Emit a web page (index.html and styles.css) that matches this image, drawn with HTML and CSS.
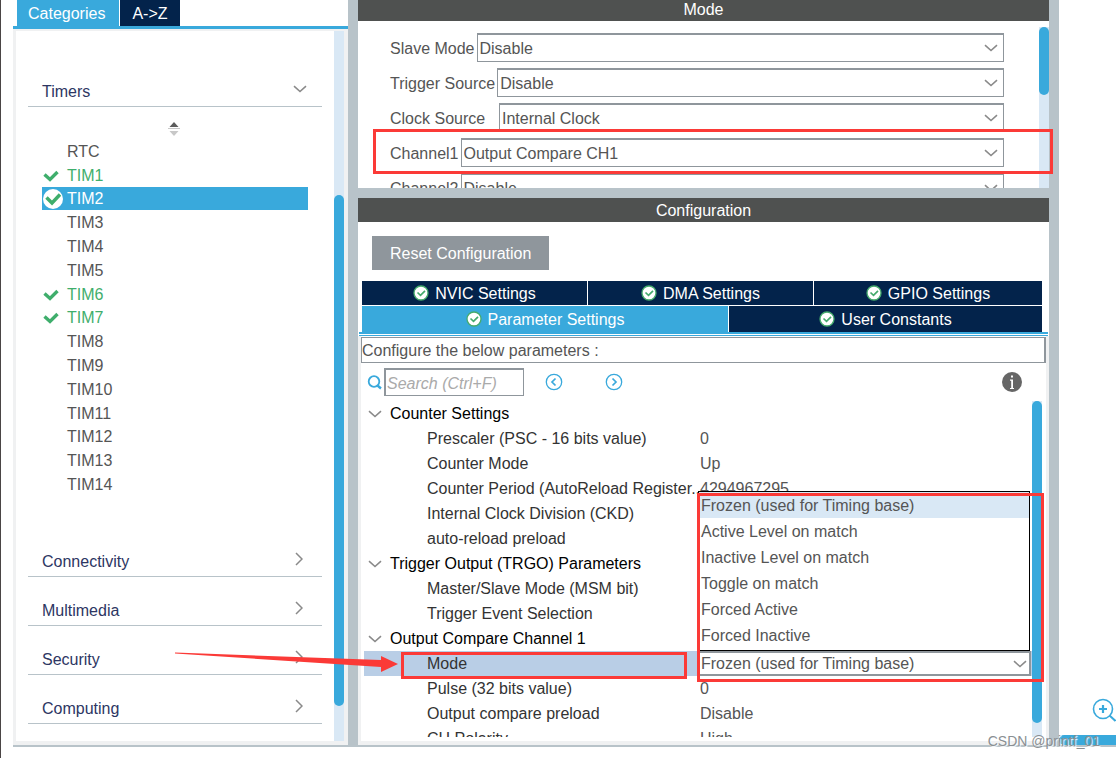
FILE: index.html
```html
<!DOCTYPE html>
<html lang="en">
<head>
<meta charset="utf-8">
<title>Pinout &amp; Configuration</title>
<link rel="stylesheet" href="styles.css">
</head>
<body>
<svg class="defs" aria-hidden="true">
  <symbol id="down" viewBox="0 0 14 8"><path d="M1 1.2 7 6.5 13 1.2" fill="none" stroke="#8a8a8a" stroke-width="1.6"/></symbol>
  <symbol id="right" viewBox="0 0 8 14"><path d="M1 1 7 7 1 13" fill="none" stroke="#8a8a8a" stroke-width="1.5"/></symbol>
  <symbol id="tick" viewBox="0 0 16 12"><path d="M1.5 4.5 7 9.5 14.500 2" fill="none" stroke="#3fae6c" stroke-width="3.400"/></symbol>
  <symbol id="ticked" viewBox="0 0 20 20"><circle cx="10" cy="10" r="10" fill="#fff"/><path d="M3.500 8.500 9 14 17 5.500" fill="none" stroke="#3fae6c" stroke-width="3.400"/></symbol>
  <symbol id="badge" viewBox="0 0 16 16"><circle cx="8" cy="8" r="7" fill="#fff" stroke="#45ab6d" stroke-width="1.300"/><path d="M4.500 7.500 7.500 10.300 12 5.800" fill="none" stroke="#45ab6d" stroke-width="1.700"/></symbol>
</svg>
<div class="app">
  <aside class="side">
    <nav class="side-tabs">
      <button class="side-tab active" type="button">Categories</button>
      <button class="side-tab" type="button">A-&gt;Z</button>
    </nav>
    <div class="side-body">
      <div class="side-list">
        <button class="category" type="button"><span>Timers</span><svg class="i-down"><use href="#down"/></svg></button>
        <div class="sorter"><svg width="12" height="14" viewBox="0 0 12 14"><path d="M6 0 10.500 5h-9z" fill="#5c5c5c"/><path d="M0 6h12v1H0z" fill="#c8c8c8"/><path d="M1.500 9h9L6 14z" fill="#c8c8c8"/></svg></div>
        <ul class="timers">
          <li><span class="mark"></span>RTC</li>
          <li class="on"><span class="mark"><svg class="i-tick"><use href="#tick"/></svg></span>TIM1</li>
          <li class="selected"><span class="mark"><svg class="i-ticked"><use href="#ticked"/></svg></span>TIM2</li>
          <li><span class="mark"></span>TIM3</li>
          <li><span class="mark"></span>TIM4</li>
          <li><span class="mark"></span>TIM5</li>
          <li class="on"><span class="mark"><svg class="i-tick"><use href="#tick"/></svg></span>TIM6</li>
          <li class="on"><span class="mark"><svg class="i-tick"><use href="#tick"/></svg></span>TIM7</li>
          <li><span class="mark"></span>TIM8</li>
          <li><span class="mark"></span>TIM9</li>
          <li><span class="mark"></span>TIM10</li>
          <li><span class="mark"></span>TIM11</li>
          <li><span class="mark"></span>TIM12</li>
          <li><span class="mark"></span>TIM13</li>
          <li><span class="mark"></span>TIM14</li>
        </ul>
        <button class="category" type="button"><span>Connectivity</span><svg class="i-right"><use href="#right"/></svg></button>
        <button class="category" type="button"><span>Multimedia</span><svg class="i-right"><use href="#right"/></svg></button>
        <button class="category" type="button"><span>Security</span><svg class="i-right"><use href="#right"/></svg></button>
        <button class="category" type="button"><span>Computing</span><svg class="i-right"><use href="#right"/></svg></button>
      </div>
      <div class="track side-track"><div class="thumb"></div></div>
    </div>
  </aside>
  <div class="split"></div>
  <main class="center">
    <section class="mode">
      <h2 class="title mode-title">Mode</h2>
      <div class="mode-body">
        <div class="fields">
          <div class="field"><label for="slave">Slave Mode</label><div class="pick"><select id="slave"><option>Disable</option></select><svg class="i-down"><use href="#down"/></svg></div></div>
          <div class="field"><label for="trigger">Trigger Source</label><div class="pick"><select id="trigger"><option>Disable</option></select><svg class="i-down"><use href="#down"/></svg></div></div>
          <div class="field"><label for="clock" class="wide">Clock Source</label><div class="pick"><select id="clock"><option>Internal Clock</option></select><svg class="i-down"><use href="#down"/></svg></div></div>
          <div class="field"><label for="ch1">Channel1</label><div class="pick"><select id="ch1"><option>Output Compare CH1</option></select><svg class="i-down"><use href="#down"/></svg></div></div>
          <div class="field"><label for="ch2">Channel2</label><div class="pick"><select id="ch2"><option>Disable</option></select><svg class="i-down"><use href="#down"/></svg></div></div>
        </div>
        <div class="track mode-track"><div class="thumb"></div></div>
      </div>
    </section>
    <section class="config">
      <h2 class="title">Configuration</h2>
      <button class="reset" type="button">Reset Configuration</button>
      <div class="tabs">
        <div class="tab-row three">
          <button type="button"><svg class="i-badge"><use href="#badge"/></svg>NVIC Settings</button>
          <button type="button"><svg class="i-badge"><use href="#badge"/></svg>DMA Settings</button>
          <button type="button"><svg class="i-badge"><use href="#badge"/></svg>GPIO Settings</button>
        </div>
        <div class="tab-row two">
          <button type="button" class="active"><svg class="i-badge"><use href="#badge"/></svg>Parameter Settings</button>
          <button type="button"><svg class="i-badge"><use href="#badge"/></svg>User Constants</button>
        </div>
      </div>
      <div class="rule"></div>
      <div class="params">
        <p class="hint">Configure the below parameters :</p>
        <div class="tools">
          <label for="search" aria-label="Search"><svg width="16" height="16" viewBox="0 0 16 16" fill="none" stroke="#39a9dc"><circle cx="7" cy="7.500" r="5.300" stroke-width="1.800"/><path d="m10.500 11.500 3.500 3" stroke-width="2.400"/></svg></label>
          <input id="search" type="text" placeholder="Search (Ctrl+F)">
          <button class="step" type="button" aria-label="Previous"><svg width="18" height="18" viewBox="0 0 18 18" fill="none" stroke="#39a9dc" stroke-width="1.300"><circle cx="9" cy="9" r="7.700"/><path d="M10.500 5.500 7 9l3.500 3.500" stroke-width="1.700"/></svg></button>
          <button class="step" type="button" aria-label="Next"><svg width="18" height="18" viewBox="0 0 18 18" fill="none" stroke="#39a9dc" stroke-width="1.300"><circle cx="9" cy="9" r="7.700"/><path d="M7.500 5.500 11 9l-3.500 3.500" stroke-width="1.700"/></svg></button>
          <button class="info" type="button" aria-label="Information"><svg width="20" height="20" viewBox="0 0 20 20"><circle cx="10" cy="10" r="10" fill="#666"/><path d="M9 3.500h2v2H9zM8 7.500h3V16H9.200V8.700H8zM8 16h4v1H8z" fill="#fff"/></svg></button>
        </div>
        <div class="tree">
          <div class="tree-view">
            <table>
              <colgroup><col class="c-name"><col></colgroup>
              <tbody>
                <tr><th colspan="2"><button type="button"><svg class="i-down"><use href="#down"/></svg>Counter Settings</button></th></tr>
                <tr><td>Prescaler (PSC - 16 bits value)</td><td>0</td></tr>
                <tr><td>Counter Mode</td><td>Up</td></tr>
                <tr><td>Counter Period (AutoReload Register..</td><td>4294967295</td></tr>
                <tr><td>Internal Clock Division (CKD)</td><td></td></tr>
                <tr><td>auto-reload preload</td><td></td></tr>
                <tr><th colspan="2"><button type="button"><svg class="i-down"><use href="#down"/></svg>Trigger Output (TRGO) Parameters</button></th></tr>
                <tr><td>Master/Slave Mode (MSM bit)</td><td></td></tr>
                <tr><td>Trigger Event Selection</td><td></td></tr>
                <tr><th colspan="2"><button type="button"><svg class="i-down"><use href="#down"/></svg>Output Compare Channel 1</button></th></tr>
                <tr class="current"><td><label for="ocmode">Mode</label></td><td class="editor">
                  <div class="pick"><select id="ocmode"><option>Frozen (used for Timing base)</option></select><svg class="i-down"><use href="#down"/></svg></div>
                  <ul class="menu">
                    <li class="hover">Frozen (used for Timing base)</li>
                    <li>Active Level on match</li>
                    <li>Inactive Level on match</li>
                    <li>Toggle on match</li>
                    <li>Forced Active</li>
                    <li>Forced Inactive</li>
                  </ul>
                </td></tr>
                <tr><td>Pulse (32 bits value)</td><td>0</td></tr>
                <tr><td>Output compare preload</td><td>Disable</td></tr>
                <tr><td>CH Polarity</td><td>High</td></tr>
              </tbody>
            </table>
          </div>
          <div class="track tree-track"><div class="thumb"></div></div>
        </div>
      </div>
    </section>
  </main>
  <div class="split"></div>
  <aside class="view">
    <button class="zoom" type="button" aria-label="Zoom in"><svg width="26" height="26" viewBox="0 0 26 26" fill="none" stroke="#39a9dc"><circle cx="11" cy="11" r="9.500" stroke-width="1.600"/><path d="M11 7v8M7 11h8" stroke-width="2.200"/><path d="m17.500 17.500 6 5.500" stroke-width="2"/></svg></button>
    <div class="view-bar"></div>
  </aside>
</div>
<div class="note note-channel"></div>
<div class="note note-mode"></div>
<div class="note note-value"></div>
<svg class="arrow" width="224" height="20" viewBox="0 0 224 20"><path d="M0 .5 206 8V4l17 8-17 8v-5L0 1.500z" fill="#fb3a37"/></svg>
<div class="watermark">CSDN @printf_01</div>
</body>
</html>
```
FILE: styles.css
```css
* { box-sizing: border-box; }
body {
  margin: 0;
  overflow: hidden;
  font: 16px/24px "Liberation Sans", Arial, sans-serif;
  color: #555;
  background: #fff;
}
button, input, select { font: inherit; color: inherit; }
button { border: 0; padding: 0; background: none; }
ul, p, h2 { margin: 0; padding: 0; }
ul { list-style: none; }
svg { display: block; flex: none; }
.defs { position: absolute; width: 0; height: 0; }
.i-down { width: 14px; height: 8px; }
.i-right { width: 8px; height: 14px; }
.i-tick { width: 16px; height: 12px; }
.i-ticked { width: 20px; height: 20px; }
.i-badge { width: 16px; height: 16px; }

.app {
  display: flex;
  height: 100vh;
  padding: 0 0 11px 12px;
  border-left: 1px solid #4a4545;
}
.split { width: 10px; flex: none; background: #b8c3c9; }

.track { width: 10px; flex: none; background: #d9e8f5; }
.thumb { border-radius: 5px; background: #39a9dc; }

/* category panel */
.side {
  width: 335px;
  flex: none;
  display: flex;
  flex-direction: column;
  border-bottom: 2px solid #b8c3c9;
}
.side-tabs {
  display: flex;
  gap: 1px;
  height: 29px;
  padding-left: 4px;
  border-bottom: 3px solid #39a9dc;
}
.side-tab { padding: 2px 12px 0; background: #03234b; color: #fff; }
.side-tab:first-child { padding: 2px 14px 0 11px; }
.side-tab.active { background: #39a9dc; }
.side-body {
  flex: 1;
  min-height: 0;
  display: flex;
  border: solid #f0f1f2;
  border-width: 2px 4px 4px 3px;
}
.side-list { flex: 1; padding: 27px 12px 0; }
.category {
  display: flex;
  width: 100%;
  height: 49px;
  padding: 20px 14px 0;
  justify-content: space-between;
  align-items: center;
  border-bottom: 1px solid #b8c3c9;
  color: #2d3663;
}
.category svg { margin-bottom: 6px; }
.category .i-down { margin-right: 1px; }
.category .i-right { margin-right: 5px; }
.sorter { display: flex; height: 32px; justify-content: center; padding: 15px 2px 0 0; }
.timers {
  display: flex;
  flex-direction: column;
  height: 357px;
  margin: 0 14px 32px;
  line-height: 20px;
}
.timers li { flex: 1; display: flex; align-items: center; padding-top: 2px; }
.timers .on { color: #3fae6c; }
.timers .selected { background: #39a9dc; color: #fff; }
.mark { width: 25px; padding-left: 1px; flex: none; }
.side-track { padding-top: 164px; }
.side-track .thumb { height: 511px; }

/* centre column */
.center { flex: 1; min-width: 0; max-width: 691px; display: flex; flex-direction: column; }
.title {
  height: 24px;
  font-size: 16px;
  line-height: 26px;
  font-weight: 400;
  text-align: center;
  color: #fff;
  background: #4f5150;
}
.mode-title { height: 21px; line-height: 20px; }
.mode {
  flex: none;
  height: 198px;
  display: flex;
  flex-direction: column;
  border-bottom: 10px solid #b8c3c9;
}
.mode-body { flex: 1; min-height: 0; display: flex; overflow: hidden; }
.fields { flex: 1; padding: 12px 35px 0 32px; display: flex; flex-direction: column; gap: 6px; }
.field { display: flex; gap: 2px; height: 29px; flex: none; }
.field label { line-height: 31px; white-space: nowrap; }
.field .wide { min-width: 107px; }
.field .pick { flex: 1; }
.mode-track { margin-top: 6px; }
.mode-track .thumb { height: 68px; }
.pick { display: flex; align-items: center; border: 1px solid #8f969c; border-top-width: 2px; background: #fff; }
.pick select {
  flex: 1;
  height: 100%;
  margin-right: -20px;
  padding: 1px 20px 0 2px;
  border: 0;
  background: none;
  appearance: none;
}
.pick svg { margin-right: 5px; }

/* configuration */
.config {
  flex: 1;
  min-height: 0;
  display: flex;
  flex-direction: column;
  border-bottom: 2px solid #b8c3c9;
}
.reset {
  flex: none;
  align-self: flex-start;
  height: 34px;
  margin: 14px 0 11px 14px;
  padding: 1px 18px 0;
  color: #fff;
  background: #8f969c;
}
.tabs { display: grid; gap: 1px; margin: 0 7px 0 4px; }
.tab-row { display: grid; gap: 1px; }
.three { grid-template-columns: 225fr 225fr 228fr; height: 24px; }
.two { grid-template-columns: 366fr 313fr; height: 26px; }
.tab-row button {
  display: flex;
  align-items: center;
  justify-content: center;
  gap: 6px;
  height: 100%;
  padding-top: 2px;
  line-height: 20px;
  color: #fff;
  background: #03234b;
}
.three, .two { grid-template-rows: 100%; }
.tab-row svg { margin-bottom: 2px; }
.tab-row .active { background: #39a9dc; }
.rule { flex: none; height: 4px; margin: 0 1px; border: solid #39a9dc; border-width: 2px 0 1px; }
.params {
  flex: 1;
  min-height: 0;
  display: flex;
  flex-direction: column;
  padding-top: 1px;
  border: solid #f0f1f2;
  border-width: 0 3px 4px;
}
.hint { height: 26px; line-height: 26px; border: 1px solid #8f969c; border-right-width: 2px; }
.tools { display: flex; align-items: center; height: 38px; padding: 0 24px 0 6px; }
.tools input {
  width: 140px;
  height: 28px;
  margin: 0 21px 0 1px;
  padding: 2px 1px 0;
  border: 1px solid #8f969c;
  border-width: 2px 1px 1px 2px;
  border-radius: 0;
}
.tools input::placeholder { color: #aaa; font-style: italic; opacity: 1; }
.step { margin-right: 42px; }
.info { margin-left: auto; }
.tree { flex: 1; min-height: 0; display: flex; padding: 0 4px 4px 3px; }
.tree-view { flex: 1; overflow: hidden; }
table { width: 100%; border-collapse: collapse; table-layout: fixed; }
.c-name { width: 334px; }
tr { height: 25px; }
td, th { padding: 0 2px; font-weight: 400; text-align: left; white-space: nowrap; }
td:first-child { padding: 0 0 0 63px; color: #333; }
th button { display: flex; align-items: center; gap: 8px; color: #000; }
th svg { margin-left: 2px; }
.current { background: #b9cee6; }
.current .editor { position: relative; padding: 0 1px 0 0; }
.editor .pick { height: 25px; border-width: 2px; }
.editor .pick select { padding: 0 20px 0 1px; line-height: 20px; }
.editor .pick svg { margin-right: 2px; }
.menu {
  position: absolute;
  left: 0;
  right: 2px;
  bottom: 25px;
  padding-bottom: 2px;
  border: 1px solid #000;
  background: #fff;
}
.menu li { height: 26px; padding-left: 2px; line-height: 28px; }
.menu .hover { background: #d9e8f5; }
.tree-track .thumb { height: 322px; }

/* pinout view */
.view {
  flex: 0 1 57px;
  display: flex;
  flex-direction: column;
  justify-content: flex-end;
  overflow: hidden;
  border-bottom: 2px solid #b8c3c9;
}
.zoom { align-self: flex-start; margin: 0 0 11px 33px; }
.view-bar { height: 10px; border-radius: 5px 0 0 5px; background: #39a9dc; }

/* annotations lying over the window */
.note { position: absolute; border: 3px solid #fb3a37; pointer-events: none; }
.note-channel { left: 373px; top: 129px; width: 680px; height: 45px; }
.note-mode { left: 401px; top: 652px; width: 286px; height: 27px; }
.note-value { left: 697px; top: 493px; width: 347px; height: 189px; }
.arrow { position: absolute; left: 175px; top: 652px; }
.watermark {
  position: absolute;
  right: 16px;
  bottom: 5px;
  font-size: 14px;
  color: #8a8f93;
  text-shadow: 1px 1px 1px #fff;
}
```
